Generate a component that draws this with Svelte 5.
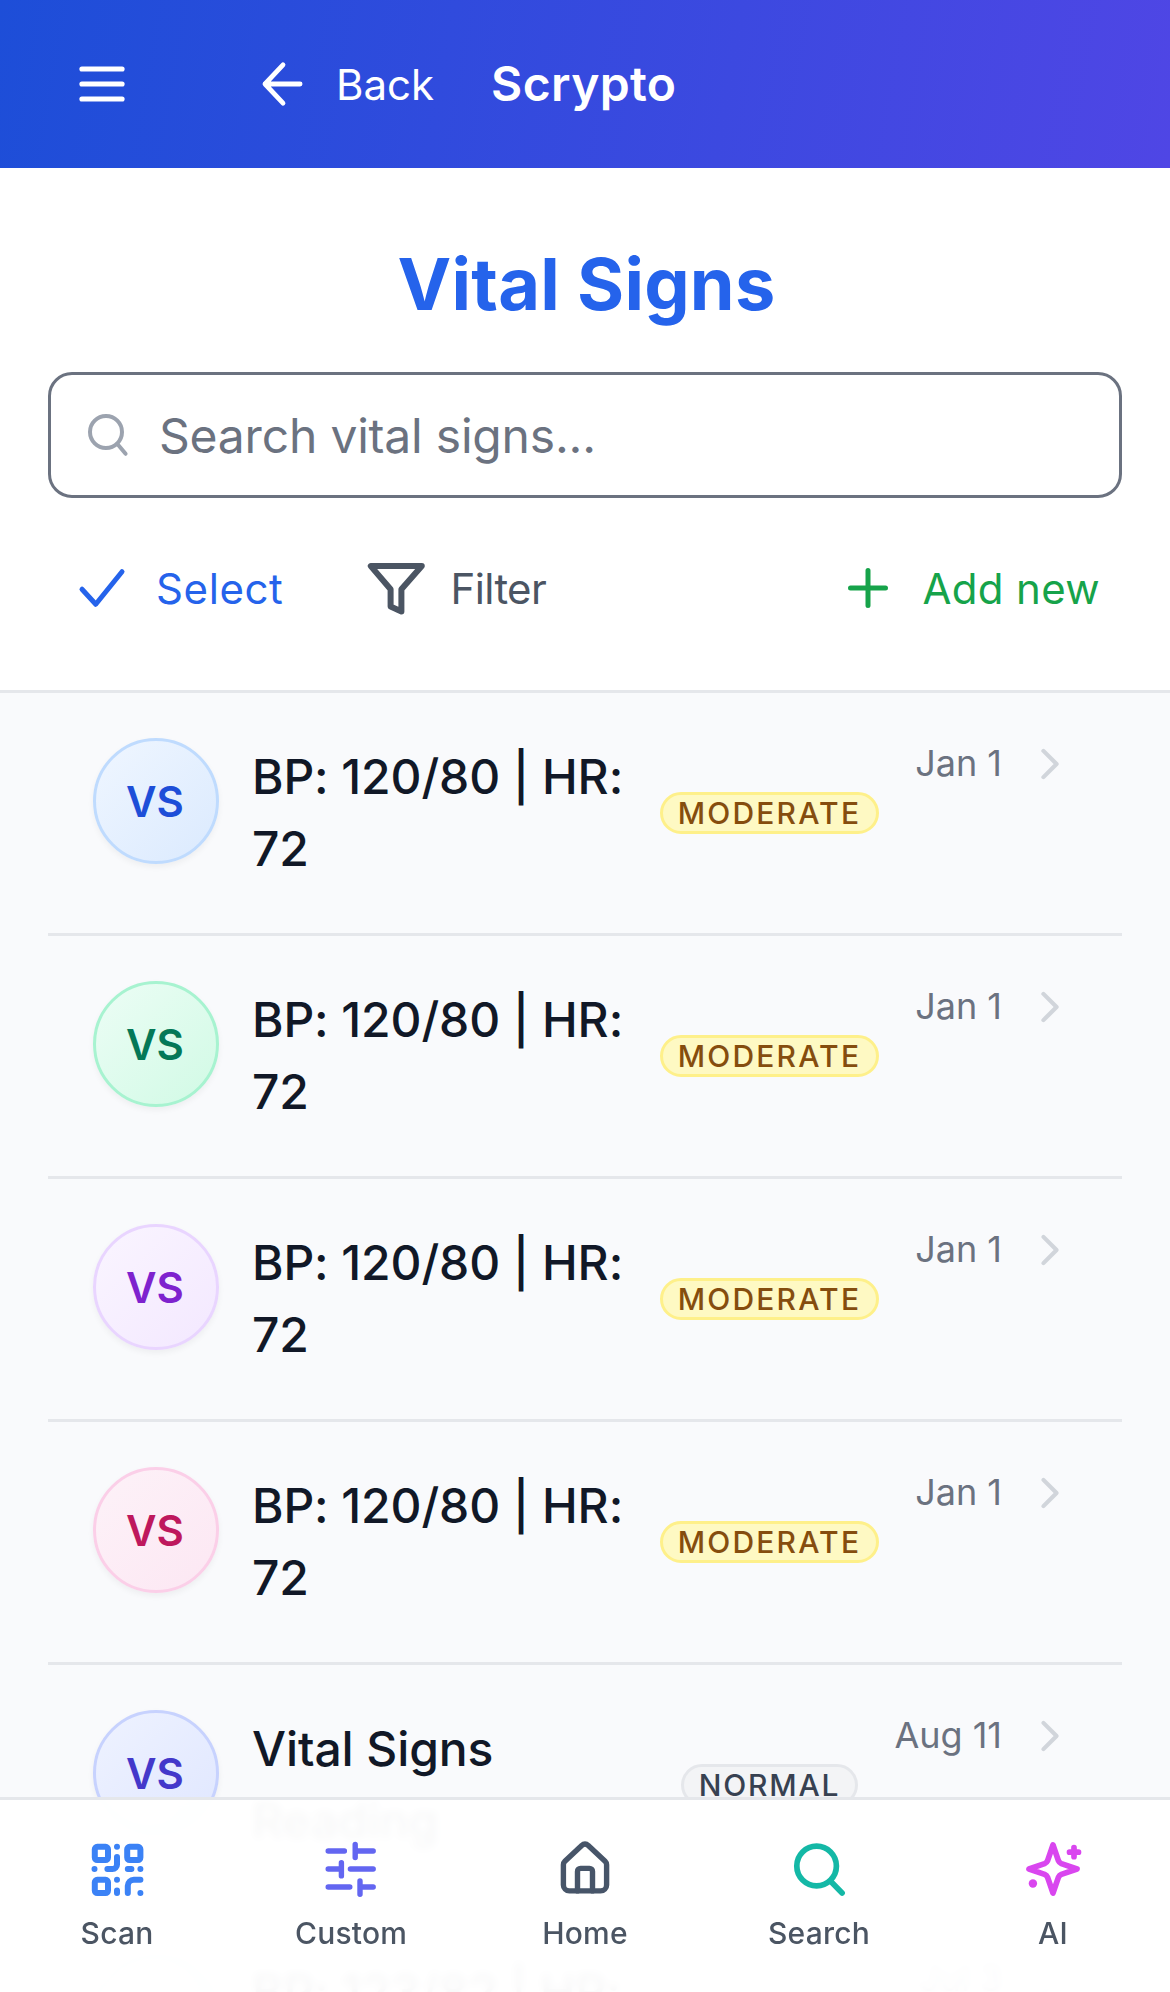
<script>
  const items = [
    { tone: 'blue', title: 'BP: 120/80 | HR: 72', badge: 'MODERATE', date: 'Jan 1' },
    { tone: 'green', title: 'BP: 120/80 | HR: 72', badge: 'MODERATE', date: 'Jan 1' },
    { tone: 'purple', title: 'BP: 120/80 | HR: 72', badge: 'MODERATE', date: 'Jan 1' },
    { tone: 'pink', title: 'BP: 120/80 | HR: 72', badge: 'MODERATE', date: 'Jan 1' },
    { tone: 'indigo', title: 'Vital Signs Reading', badge: 'NORMAL', date: 'Aug 11' },
    { tone: 'blue', title: 'BP: 123/82 | HR: 70', badge: 'NORMAL', date: 'Jul 3' }
  ];
</script>

<div class="page">
  <header class="topbar">
    <button class="icon-btn menu" aria-label="Menu">
      <svg viewBox="0 0 24 24" width="72" height="72" fill="none" stroke="currentColor" stroke-width="1.7" stroke-linecap="round">
        <path d="M5.3 7h13.4M5.3 12h13.4M5.3 17h13.4" />
      </svg>
    </button>
    <button class="back">
      <svg viewBox="0 0 24 24" width="72" height="72" fill="none" stroke="currentColor" stroke-width="1.6" stroke-linecap="round" stroke-linejoin="round">
        <path d="M12 5.6 6 12l6 6.4M6 12h11.7" />
      </svg>
      <span>Back</span>
    </button>
    <span class="brand">Scrypto</span>
  </header>

  <main>
    <section class="head">
      <h1>Vital Signs</h1>
      <label class="search">
        <svg viewBox="0 0 24 24" width="48" height="48" fill="none" stroke="currentColor" stroke-width="2" stroke-linecap="round">
          <circle cx="11" cy="10.5" r="8" />
          <path d="m16.6 16.4 4.2 5" />
        </svg>
        <input type="text" placeholder="Search vital signs..." />
      </label>
      <div class="actions">
        <div class="left">
          <button class="action select">
            <svg viewBox="0 0 24 24" width="60" height="60" fill="none" stroke="currentColor" stroke-width="2" stroke-linecap="round" stroke-linejoin="round">
              <path d="M4 12.5 9.5 18.5 20 5.5" />
            </svg>
            Select
          </button>
          <button class="action filter">
            <svg viewBox="0 0 24 24" width="72" height="72" fill="none" stroke="currentColor" stroke-width="2" stroke-linecap="round" stroke-linejoin="round">
              <path d="M3.6 4.7h17l-6.8 7.7v7.4l-3.6-1.6v-5.8z" />
            </svg>
            Filter
          </button>
        </div>
        <button class="action add">
          <svg viewBox="0 0 24 24" width="60" height="60" fill="none" stroke="currentColor" stroke-width="2" stroke-linecap="round">
            <path d="M12 5v14M5 12h14" />
          </svg>
          Add new
        </button>
      </div>
    </section>

    <ul class="list">
      {#each items as item}
        <li class="row">
          <span class="avatar {item.tone}">VS</span>
          <span class="title">{item.title}</span>
          <span class="badge" class:normal={item.badge === 'NORMAL'}>{item.badge}</span>
          <span class="meta">
            <span class="date">{item.date}</span>
            <svg viewBox="0 0 24 24" width="42" height="42" fill="none" stroke="#d1d5db" stroke-width="2.4" stroke-linecap="round" stroke-linejoin="round">
              <path d="m8.25 4.5 7.5 7.5-7.5 7.5" />
            </svg>
          </span>
        </li>
      {/each}
    </ul>
  </main>

  <nav class="tabs">
    <button class="tab">
      <svg viewBox="0 0 24 24" width="72" height="72" fill="none" stroke="#3b82f6" stroke-width="2" stroke-linecap="round" stroke-linejoin="round">
        <rect x="4.6" y="4.6" width="4.4" height="4.4" rx="0.8" />
        <rect x="15.4" y="4.6" width="4.4" height="4.4" rx="0.8" />
        <rect x="4.6" y="15.6" width="4.4" height="4.4" rx="0.8" />
        <path d="M12 4.6v.01M12 8v2.5a1.5 1.5 0 0 1-1.5 1.5H8.8M4.5 12v.01M15.6 12h1.2M19.8 12v.01M12 15.6v.01M12 19.2v.8M15.6 20v-2.4a2 2 0 0 1 2-2h2.2M19.8 20v.01" />
      </svg>
      Scan
    </button>
    <button class="tab">
      <svg viewBox="0 0 24 24" width="72" height="72" fill="none" stroke="#6366f1" stroke-width="1.8" stroke-linecap="round">
        <path d="M4.4 6h5.4M13.4 3.8v4.4M13.4 6h6M4.4 12h4.2M8.8 9.9v4.4M11.8 12h7.6M4.4 18h7.2M15 16v4.4M15 18h4.4" />
      </svg>
      Custom
    </button>
    <button class="tab">
      <svg viewBox="0 0 24 24" width="72" height="72" fill="none" stroke="#475569" stroke-width="1.8" stroke-linecap="round" stroke-linejoin="round">
        <path d="M11 4.1a1.4 1.4 0 0 1 2 0l5.7 5.3a1.6 1.6 0 0 1 .5 1.2v6.7a2 2 0 0 1-2 2H6.8a2 2 0 0 1-2-2v-6.7a1.6 1.6 0 0 1 .5-1.2z" />
        <path d="M9.5 19.3v-6.5a1 1 0 0 1 1-1h3a1 1 0 0 1 1 1v6.5" />
      </svg>
      Home
    </button>
    <button class="tab">
      <svg viewBox="0 0 24 24" width="72" height="72" fill="none" stroke="#14b8a6" stroke-width="1.9" stroke-linecap="round">
        <circle cx="11.2" cy="11" r="6.6" />
        <path d="m15.8 16 3.9 4" />
      </svg>
      Search
    </button>
    <button class="tab">
      <svg viewBox="0 0 24 24" width="72" height="72" fill="none" stroke="#d946ef" stroke-width="1.9" stroke-linecap="round" stroke-linejoin="round">
        <path d="M12 4l1.8 5.2q.3.7 1 1L20 12l-5.2 1.8q-.7.3-1 1L12 20l-1.8-5.2q-.3-.7-1-1L4 12l5.2-1.8q.7-.3 1-1z" />
        <path d="M19 4.9v3M17.5 6.4h3" />
        <path d="M5.3 16.8v.01" stroke-width="2.8" />
      </svg>
      AI
    </button>
  </nav>
</div>

<style>
  :global(body) {
    margin: 0;
    background: #fff;
    font-family: Inter, "Liberation Sans", sans-serif;
  }

  :global(*) { box-sizing: border-box; }

  button {
    appearance: none;
    background: none;
    border: 0;
    padding: 0;
    margin: 0;
    font: inherit;
    color: inherit;
  }

  svg { display: block; flex-shrink: 0; }

  .page {
    height: 1992px;
    overflow: hidden;
    position: relative;
  }

  /* Top bar */
  .topbar {
    height: 168px;
    display: flex;
    align-items: center;
    padding-left: 66px;
    color: #fff;
    background: linear-gradient(100deg, #1d4ed8, #4f46e5);
  }

  .menu { margin-right: 109px; }

  .back {
    display: flex;
    align-items: center;
    gap: 17px;
    font-size: 42px;
    margin-right: 57px;
  }

  .brand {
    font-size: 48px;
    font-weight: 600;
    letter-spacing: 0.35px;
    margin-bottom: 2px;
  }

  /* Heading, search and actions */
  .head {
    padding: 0 48px;
    background: #fff;
    border-bottom: 3px solid #e5e7eb;
  }

  h1 {
    margin: 0;
    padding: 68px 0 0 3px;
    height: 204px;
    font-size: 72px;
    line-height: 96px;
    font-weight: 700;
    letter-spacing: 0.2px;
    text-align: center;
    color: #2563eb;
  }

  .search {
    display: flex;
    align-items: center;
    gap: 27px;
    height: 126px;
    padding: 0 33px;
    border: 3px solid #6b7280;
    border-radius: 24px;
    color: #9ca3af;
  }

  input {
    flex: 1;
    min-width: 0;
    border: 0;
    outline: 0;
    padding: 0;
    background: none;
    font: inherit;
    font-size: 48px;
    letter-spacing: -0.2px;
    color: #111827;
  }

  input::placeholder { color: #6b7280; opacity: 1; }

  .actions {
    height: 192px;
    padding-bottom: 12px;
    display: flex;
    align-items: center;
    justify-content: space-between;
  }

  .left { display: flex; gap: 29px; }

  .action {
    display: flex;
    align-items: center;
    gap: 24px;
    padding: 0 24px;
    font-size: 42px;
  }

  .select { color: #2563eb; letter-spacing: 0.6px; }
  .filter { color: #4b5563; gap: 18px; letter-spacing: -0.6px; }
  .add { color: #16a34a; letter-spacing: 0.35px; padding-right: 22px; }

  /* List */
  main { background: #f9fafc; }

  .list {
    list-style: none;
    margin: 0;
    padding: 0 48px;
  }

  .row {
    display: flex;
    align-items: center;
    gap: 36px;
    padding: 48px 51px 48px 45px;
    border-bottom: 3px solid #e5e7eb;
  }

  .avatar {
    flex-shrink: 0;
    align-self: flex-start;
    width: 126px;
    height: 126px;
    padding-right: 2px;
    margin-top: -3px;
    margin-right: -3px;
    display: flex;
    align-items: center;
    justify-content: center;
    border-radius: 50%;
    border: 3px solid;
    font-size: 42px;
    font-weight: 600;
    box-shadow: 0 3px 6px rgba(0, 0, 0, 0.05);
  }

  .blue { background: linear-gradient(135deg, #eff6ff, #dbeafe); border-color: #bfdbfe; color: #1d4ed8; }
  .green { background: linear-gradient(135deg, #ecfdf5, #d1fae5); border-color: #a7f3d0; color: #047857; }
  .purple { background: linear-gradient(135deg, #faf5ff, #f3e8ff); border-color: #e9d5ff; color: #7e22ce; }
  .pink { background: linear-gradient(135deg, #fdf2f8, #fce7f3); border-color: #fbcfe8; color: #be185d; }
  .indigo { background: linear-gradient(135deg, #eef2ff, #e0e7ff); border-color: #c7d2fe; color: #4338ca; }

  .title {
    flex: 1;
    min-width: 0;
    font-size: 48px;
    line-height: 72px;
    font-weight: 500;
    letter-spacing: -0.1px;
    color: #111827;
  }

  .badge {
    flex-shrink: 0;
    height: 42px;
    padding: 0 15px;
    margin-left: -9px;
    display: flex;
    align-items: center;
    border: 3px solid #fef08a;
    border-radius: 21px;
    background: #fef9c3;
    color: #854d0e;
    font-size: 30px;
    font-weight: 500;
    letter-spacing: 2.2px;
  }

  .badge.normal {
    background: #f3f4f6;
    border-color: #e5e7eb;
    color: #374151;
    letter-spacing: 1.8px;
  }

  .meta {
    flex-shrink: 0;
    align-self: flex-start;
    display: flex;
    align-items: center;
    gap: 27px;
    margin-top: -3px;
  }

  .date {
    font-size: 36px;
    line-height: 54px;
    margin-top: -2px;
    color: #6b7280;
  }

  /* Bottom tabs */
  .tabs {
    position: absolute;
    left: 0;
    right: 0;
    bottom: 0;
    height: 195px;
    display: grid;
    grid-template-columns: repeat(5, 1fr);
    padding-top: 33px;
    border-top: 3px solid #e5e7eb;
    background: rgba(255, 255, 255, 0.97);
    backdrop-filter: blur(4px);
  }

  .tab {
    display: flex;
    flex-direction: column;
    align-items: center;
    align-self: start;
    gap: 6px;
    font-size: 30px;
    line-height: 45px;
    font-weight: 500;
    letter-spacing: 0.2px;
    color: #4b5563;
  }
</style>
